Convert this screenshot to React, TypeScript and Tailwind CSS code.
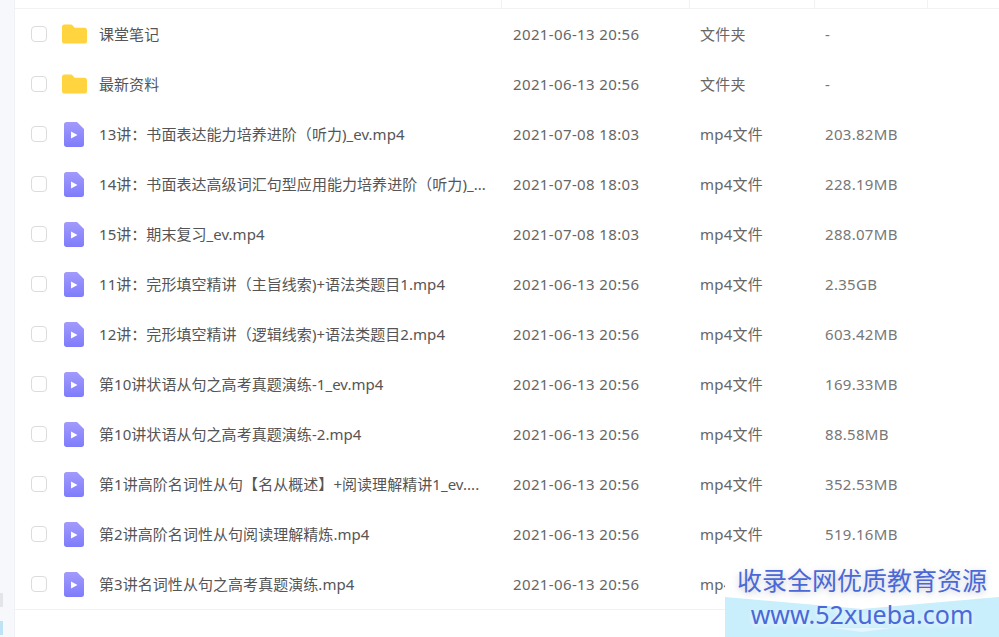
const rows = [
  { name: "课堂笔记", date: "2021-06-13 20:56", type: "文件夹", size: "-", folder: true },
  { name: "最新资料", date: "2021-06-13 20:56", type: "文件夹", size: "-", folder: true },
  { name: "13讲：书面表达能力培养进阶（听力)_ev.mp4", date: "2021-07-08 18:03", type: "mp4文件", size: "203.82MB" },
  { name: "14讲：书面表达高级词汇句型应用能力培养进阶（听力)_...", date: "2021-07-08 18:03", type: "mp4文件", size: "228.19MB" },
  { name: "15讲：期末复习_ev.mp4", date: "2021-07-08 18:03", type: "mp4文件", size: "288.07MB" },
  { name: "11讲：完形填空精讲（主旨线索)+语法类题目1.mp4", date: "2021-06-13 20:56", type: "mp4文件", size: "2.35GB" },
  { name: "12讲：完形填空精讲（逻辑线索)+语法类题目2.mp4", date: "2021-06-13 20:56", type: "mp4文件", size: "603.42MB" },
  { name: "第10讲状语从句之高考真题演练-1_ev.mp4", date: "2021-06-13 20:56", type: "mp4文件", size: "169.33MB" },
  { name: "第10讲状语从句之高考真题演练-2.mp4", date: "2021-06-13 20:56", type: "mp4文件", size: "88.58MB" },
  { name: "第1讲高阶名词性从句【名从概述】+阅读理解精讲1_ev....", date: "2021-06-13 20:56", type: "mp4文件", size: "352.53MB" },
  { name: "第2讲高阶名词性从句阅读理解精炼.mp4", date: "2021-06-13 20:56", type: "mp4文件", size: "519.16MB" },
  { name: "第3讲名词性从句之高考真题演练.mp4", date: "2021-06-13 20:56", type: "mp4文件", size: "" },
];

function FolderIcon() {
  return (
    <svg width="25" height="20" viewBox="0 0 26 20">
      <path d="M0 2.5C0 1 1 0 2.5 0H9c1 0 1.600.4 2.200 1.100L13 3.500h10.500C25 3.500 26 4.500 26 6v11.500c0 1.500-1 2.500-2.500 2.500h-21C1 20 0 19 0 17.500Z" fill="#ffd43f" />
    </svg>
  );
}

function VideoIcon() {
  return (
    <svg width="20" height="25" viewBox="0 0 20 25">
      <defs>
        <linearGradient id="vid" x1="0" y1="0" x2="0" y2="1">
          <stop offset="0" stopColor="#a29bfb" />
          <stop offset="1" stopColor="#7f7cfb" />
        </linearGradient>
      </defs>
      <path d="M2.500 0H13l7 7v15.500c0 1.500-1 2.500-2.500 2.500h-15C1 25 0 24 0 22.500v-20C0 1 1 0 2.500 0Z" fill="url(#vid)" />
      <path d="M7 9.500l6.500 3.500L7 16.500Z" fill="#fff" />
    </svg>
  );
}

export default function App() {
  return (
    <div
      className="relative flex h-[637px] w-[999px] overflow-hidden bg-white text-[15px] text-[#555]"
      style={{ fontFamily: '"Noto Sans", "Noto Sans CJK SC", sans-serif' }}
    >
      <aside className="flex w-[15px] shrink-0 flex-col justify-end border-r border-[#f0f1f4] bg-[#f7f8fb] pb-[2px]">
        <div className="mb-[14px] h-[14px] w-[3px] bg-[#e4e5e8]" />
        <div className="h-[14px] w-[3px] bg-[#bfe3f5]" />
      </aside>

      <main className="flex min-w-0 flex-1 flex-col">
        <div className="flex h-[9px] shrink-0 border-b border-[#f1f2f4]">
          <div className="w-[487px] border-r border-[#f1f2f4]" />
          <div className="w-[188px] border-r border-[#f1f2f4]" />
          <div className="w-[125px] border-r border-[#f1f2f4]" />
          <div className="w-[113px] border-r border-[#f1f2f4]" />
        </div>

        <div className="border-b border-[#f1f2f4]">
          {rows.map((row) => (
            <div key={row.name} className="flex h-[50px] items-center">
              <div className="ml-[16px] h-[16px] w-[16px] shrink-0 rounded-[4px] border border-[#dcdcdc] bg-white" />
              <div className="ml-[14px] flex w-[26px] shrink-0 justify-center">
                {row.folder ? <FolderIcon /> : <VideoIcon />}
              </div>
              <div className="ml-[12px] w-[414px] shrink-0 truncate tracking-[0.05px]">{row.name}</div>
              <div className="w-[187px] shrink-0 tracking-[0.37px] text-[#666]">{row.date}</div>
              <div className="w-[125px] shrink-0 tracking-[0.25px] text-[#666]">{row.type}</div>
              <div className="tracking-[0.3px] text-[#777]">{row.size}</div>
            </div>
          ))}
        </div>
      </main>

      {/* watermark */}
      <div className="absolute bottom-0 right-0 flex h-[72px] w-[274px] flex-col items-center text-[25px] leading-[34px] text-[#4a68d8]">
        <div className="absolute inset-x-0 top-0 h-[40px] bg-white" />
        <div className="absolute inset-x-0 bottom-0 h-[40px] bg-[#c9eefc] [clip-path:polygon(0_0,50%_30%,100%_0,100%_100%,0_100%)]" />
        <div className="absolute bottom-[5px] left-1/2 h-[4px] w-[60px] -translate-x-1/2 bg-[#e4f7fe] [clip-path:polygon(0_0,100%_0,50%_100%)]" />
        <div className="relative -mt-[2px] [text-shadow:0_2px_6px_rgba(90,100,130,0.35)]">收录全网优质教育资源</div>
        <div className="relative [text-shadow:0_2px_5px_rgba(255,255,255,0.8)]">www.52xueba.com</div>
      </div>
    </div>
  );
}
